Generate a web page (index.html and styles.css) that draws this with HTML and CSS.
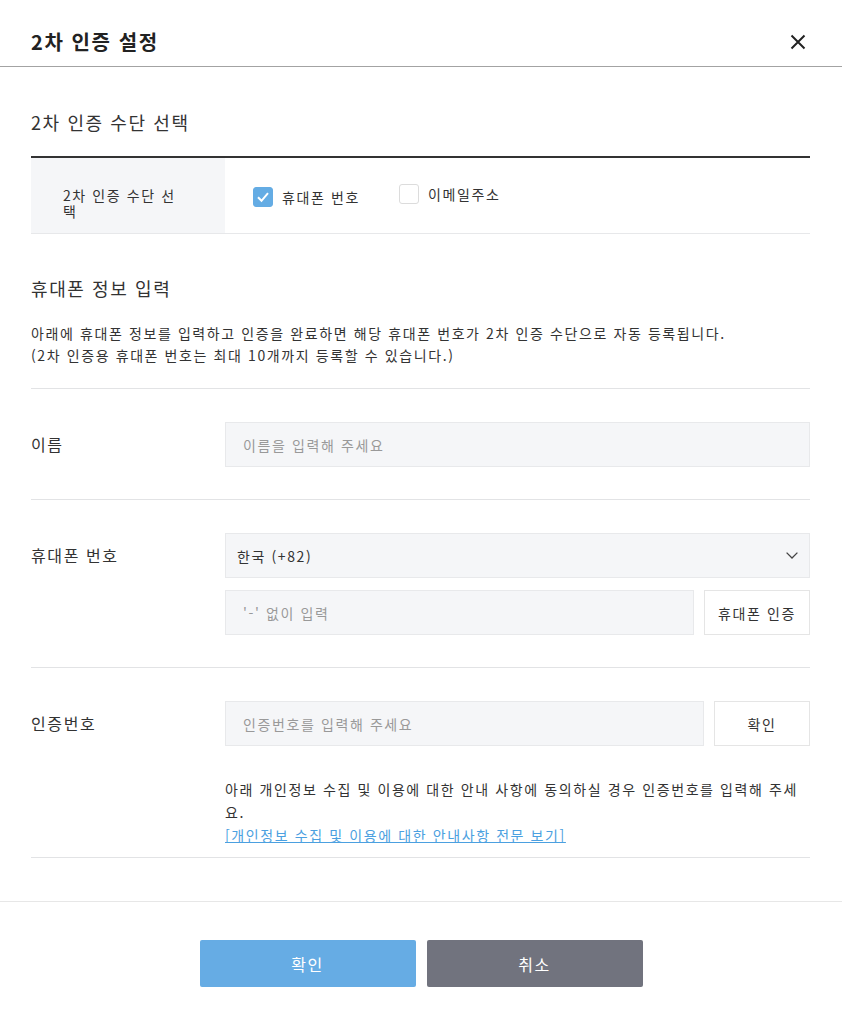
FILE: index.html
```html
<!DOCTYPE html>
<html lang="ko">
<head>
    <meta charset="UTF-8">
    <meta name="viewport" content="width=device-width, initial-scale=1.0">
    <title>2차 인증 설정</title>
    <link rel="stylesheet" href="styles.css">
</head>
<body>

    <div class="modal">
        <div class="modal-header">
            <h2>2차 인증 설정</h2>
            <button type="button" class="close-btn" aria-label="닫기">
                <svg width="16" height="16" viewBox="0 0 16 16">
                    <path d="M1.5 1.5 L14.5 14.5 M14.5 1.5 L1.5 14.5" stroke="#222" stroke-width="2" fill="none"/>
                </svg>
            </button>
        </div>

        <div class="modal-body">
            <h3 class="section-title">2차 인증 수단 선택</h3>
            <table class="method-table">
                <tr>
                    <th>2차 인증 수단 선택</th>
                    <td>
                        <label class="check">
                            <span class="box checked">
                                <svg width="14" height="14" viewBox="0 0 14 14">
                                    <path d="M2 7.2 L5.5 10.8 L12 3.2" stroke="#fff" stroke-width="2" fill="none"/>
                                </svg>
                            </span>
                            휴대폰 번호
                        </label>
                        <label class="check">
                            <span class="box"></span>
                            이메일주소
                        </label>
                    </td>
                </tr>
            </table>

            <h3 class="section-title second">휴대폰 정보 입력</h3>
            <p class="desc">
                아래에 휴대폰 정보를 입력하고 인증을 완료하면 해당 휴대폰 번호가 2차 인증 수단으로 자동 등록됩니다.<br>
                (2차 인증용 휴대폰 번호는 최대 10개까지 등록할 수 있습니다.)
            </p>

            <div class="form-rows">
                <div class="form-row">
                    <div class="row-label">이름</div>
                    <div class="row-fields">
                        <input type="text" class="field" placeholder="이름을 입력해 주세요">
                    </div>
                </div>

                <div class="form-row">
                    <div class="row-label">휴대폰 번호</div>
                    <div class="row-fields">
                        <div class="field select">
                            <span>한국 (+82)</span>
                            <svg width="12" height="7" viewBox="0 0 12 7">
                                <path d="M0.6 0.6 L6 6 L11.4 0.6" stroke="#444" stroke-width="1.3" fill="none"/>
                            </svg>
                        </div>
                        <div class="inline">
                            <input type="text" class="field" placeholder="'-' 없이 입력">
                            <button type="button" class="side-btn">휴대폰 인증</button>
                        </div>
                    </div>
                </div>

                <div class="form-row last">
                    <div class="row-label">인증번호</div>
                    <div class="row-fields">
                        <div class="inline">
                            <input type="text" class="field" placeholder="인증번호를 입력해 주세요">
                            <button type="button" class="side-btn narrow">확인</button>
                        </div>
                        <p class="notice">
                            아래 개인정보 수집 및 이용에 대한 안내 사항에 동의하실 경우 인증번호를 입력해 주세요.<br>
                            <a href="#">[개인정보 수집 및 이용에 대한 안내사항 전문 보기]</a>
                        </p>
                    </div>
                </div>
            </div>
        </div>

        <div class="modal-footer">
            <button type="button" class="btn-ok">확인</button>
            <button type="button" class="btn-cancel">취소</button>
        </div>
    </div>

</body>
</html>
```

FILE: styles.css
```css
body {
    font-family: "Noto Sans CJK KR", "Noto Sans", sans-serif;
    letter-spacing: 0.1em;
    color: #333;
    background: #fff;
    margin: 0;
    padding: 0;
}

.modal {
    width: 842px;
}

/* 헤더 */
.modal-header {
    display: flex;
    justify-content: space-between;
    align-items: center;
    padding: 30px 31px 12px;
    border-bottom: 1px solid #a3a3a3;
}

.modal-header h2 {
    margin: 0;
    font-size: 20px;
    line-height: 24px;
    font-weight: bold;
    color: #222;
}

.close-btn {
    background: none;
    border: none;
    padding: 0;
    width: 16px;
    height: 16px;
    margin-right: 5px;
    cursor: pointer;
}

/* 본문 */
.modal-body {
    padding: 0 32px 0 31px;
}

.section-title {
    margin: 42px 0 21px;
    font-size: 18px;
    line-height: 26px;
    font-weight: normal;
    color: #333;
}

.section-title.second {
    margin-top: 41px;
}

.method-table {
    width: 100%;
    border-collapse: collapse;
    border-top: 2px solid #333;
}

.method-table th {
    width: 125px;
    height: 60px;
    padding: 15px 37px 0 32px;
    background-color: #f5f6f8;
    font-size: 14px;
    line-height: 16px;
    font-weight: normal;
    text-align: left;
    color: #333;
    border-bottom: 1px solid #e7e8ea;
}

.method-table td {
    padding: 2px 0 0 28px;
    border-bottom: 1px solid #e7e8ea;
}

.check {
    display: inline-flex;
    align-items: center;
    gap: 9px;
    margin-right: 33px;
    font-size: 14px;
    color: #333;
}

.box {
    display: inline-flex;
    align-items: center;
    justify-content: center;
    width: 18px;
    height: 18px;
    border: 1px solid #dcdcdc;
    border-radius: 3px;
    background: #fff;
}

.box.checked {
    background-color: #64ace4;
    border-color: #64ace4;
}

.desc {
    margin: 0 0 22px;
    font-size: 14px;
    line-height: 22px;
    color: #333;
}

.form-rows {
    border-top: 1px solid #e2e3e5;
}

.form-row {
    display: flex;
    padding: 33px 0 32px;
    border-bottom: 1px solid #e2e3e5;
}

.form-row.last {
    padding-bottom: 10px;
}

.row-label {
    width: 194px;
    flex-shrink: 0;
    height: 45px;
    line-height: 45px;
    font-size: 16px;
    color: #333;
}

.row-fields {
    flex: 1;
    display: flex;
    flex-direction: column;
    gap: 12px;
}

.field {
    box-sizing: border-box;
    width: 100%;
    height: 45px;
    padding: 0 17px;
    background-color: #f5f6f8;
    border: 1px solid #e8e9eb;
    font-family: inherit;
    letter-spacing: inherit;
    font-size: 14px;
    color: #333;
}

.field::placeholder {
    color: #999;
}

.select {
    display: flex;
    align-items: center;
    justify-content: space-between;
    padding: 0 11px 0 11px;
}

.inline {
    display: flex;
    gap: 10px;
}

.inline .field {
    flex: 1;
}

.side-btn {
    width: 106px;
    height: 45px;
    flex-shrink: 0;
    background: #fff;
    border: 1px solid #e5e5e5;
    font-family: inherit;
    letter-spacing: inherit;
    font-size: 14px;
    color: #333;
    cursor: pointer;
}

.side-btn.narrow {
    width: 96px;
}

.notice {
    margin: 20px 0 0;
    font-size: 14px;
    line-height: 23px;
    color: #333;
}

.notice a {
    color: #4ba0e0;
    text-decoration: underline;
}

/* 하단 버튼 */
.modal-footer {
    margin-top: 43px;
    border-top: 1px solid #e7e7e7;
    padding-top: 38px;
    display: flex;
    justify-content: center;
    gap: 11px;
}

.modal-footer button {
    width: 216px;
    height: 47px;
    border: none;
    border-radius: 2px;
    color: #fff;
    font-family: inherit;
    letter-spacing: inherit;
    font-size: 16px;
    cursor: pointer;
}

.btn-ok {
    background-color: #66ace4;
}

.btn-cancel {
    background-color: #71737e;
}
```
